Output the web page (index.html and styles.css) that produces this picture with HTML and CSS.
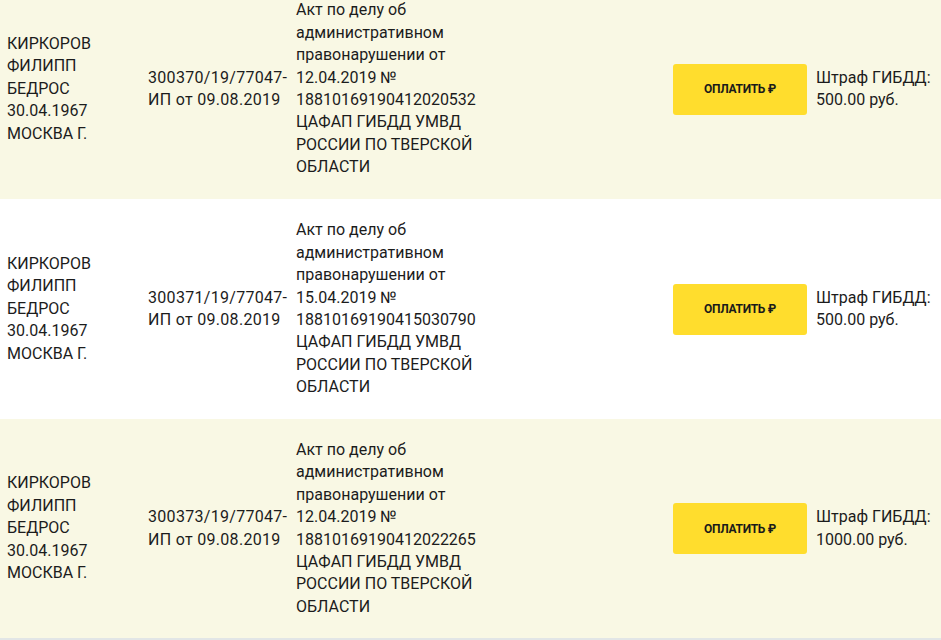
FILE: index.html
```html
<!DOCTYPE html>
<html lang="ru">
<head>
<meta charset="utf-8">
<link rel="stylesheet" href="styles.css">
</head>
<body>
<div class="list">
  <div class="row alt">
    <div class="cell name">КИРКОРОВ<br>ФИЛИПП<br>БЕДРОС<br>30.04.1967<br>МОСКВА Г.</div>
    <div class="cell num">300370/19/77047-<br>ИП от 09.08.2019</div>
    <div class="cell doc">Акт по делу об<br>административном<br>правонарушении от<br>12.04.2019 №<br>18810169190412020532<br>ЦАФАП ГИБДД УМВД<br>РОССИИ ПО ТВЕРСКОЙ<br>ОБЛАСТИ</div>
    <div class="cell pay"><button class="btn">ОПЛАТИТЬ&nbsp;₽</button></div>
    <div class="cell sum">Штраф ГИБДД:<br>500.00 руб.</div>
  </div>
  <div class="row">
    <div class="cell name">КИРКОРОВ<br>ФИЛИПП<br>БЕДРОС<br>30.04.1967<br>МОСКВА Г.</div>
    <div class="cell num">300371/19/77047-<br>ИП от 09.08.2019</div>
    <div class="cell doc">Акт по делу об<br>административном<br>правонарушении от<br>15.04.2019 №<br>18810169190415030790<br>ЦАФАП ГИБДД УМВД<br>РОССИИ ПО ТВЕРСКОЙ<br>ОБЛАСТИ</div>
    <div class="cell pay"><button class="btn">ОПЛАТИТЬ&nbsp;₽</button></div>
    <div class="cell sum">Штраф ГИБДД:<br>500.00 руб.</div>
  </div>
  <div class="row alt last">
    <div class="cell name">КИРКОРОВ<br>ФИЛИПП<br>БЕДРОС<br>30.04.1967<br>МОСКВА Г.</div>
    <div class="cell num">300373/19/77047-<br>ИП от 09.08.2019</div>
    <div class="cell doc">Акт по делу об<br>административном<br>правонарушении от<br>12.04.2019 №<br>18810169190412022265<br>ЦАФАП ГИБДД УМВД<br>РОССИИ ПО ТВЕРСКОЙ<br>ОБЛАСТИ</div>
    <div class="cell pay"><button class="btn">ОПЛАТИТЬ&nbsp;₽</button></div>
    <div class="cell sum">Штраф ГИБДД:<br>1000.00 руб.</div>
  </div>
</div>
</body>
</html>
```

FILE: styles.css
```css
html, body {
  margin: 0;
  padding: 0;
  background: #ffffff;
}
body {
  font-family: Roboto, "Noto Sans", sans-serif;
  font-size: 16px;
  line-height: 22.4px;
  color: #1c1c1c;
  overflow: hidden;
}
.list {
  margin-top: -21px;
}
.row {
  display: grid;
  grid-template-columns: 141px 148px 377px 143px 1fr;
  align-items: center;
  height: 220px;
  background: #ffffff;
}
.row.alt {
  background: #f9f8e4;
}
.row.last {
  border-bottom: 2px solid #e2e6e6;
  height: 219px;
}
.cell {
  padding-left: 7px;
  white-space: nowrap;
}
.num {
  letter-spacing: 0.3px;
}
.btn {
  width: 134px;
  height: 51px;
  border: none;
  border-radius: 3px;
  background: #ffdd2d;
  color: #1a1a1a;
  font-family: Roboto, "Noto Sans", sans-serif;
  font-weight: 700;
  font-size: 12px;
  letter-spacing: -0.3px;
  padding: 0;
  display: flex;
  align-items: center;
  justify-content: center;
}
```
